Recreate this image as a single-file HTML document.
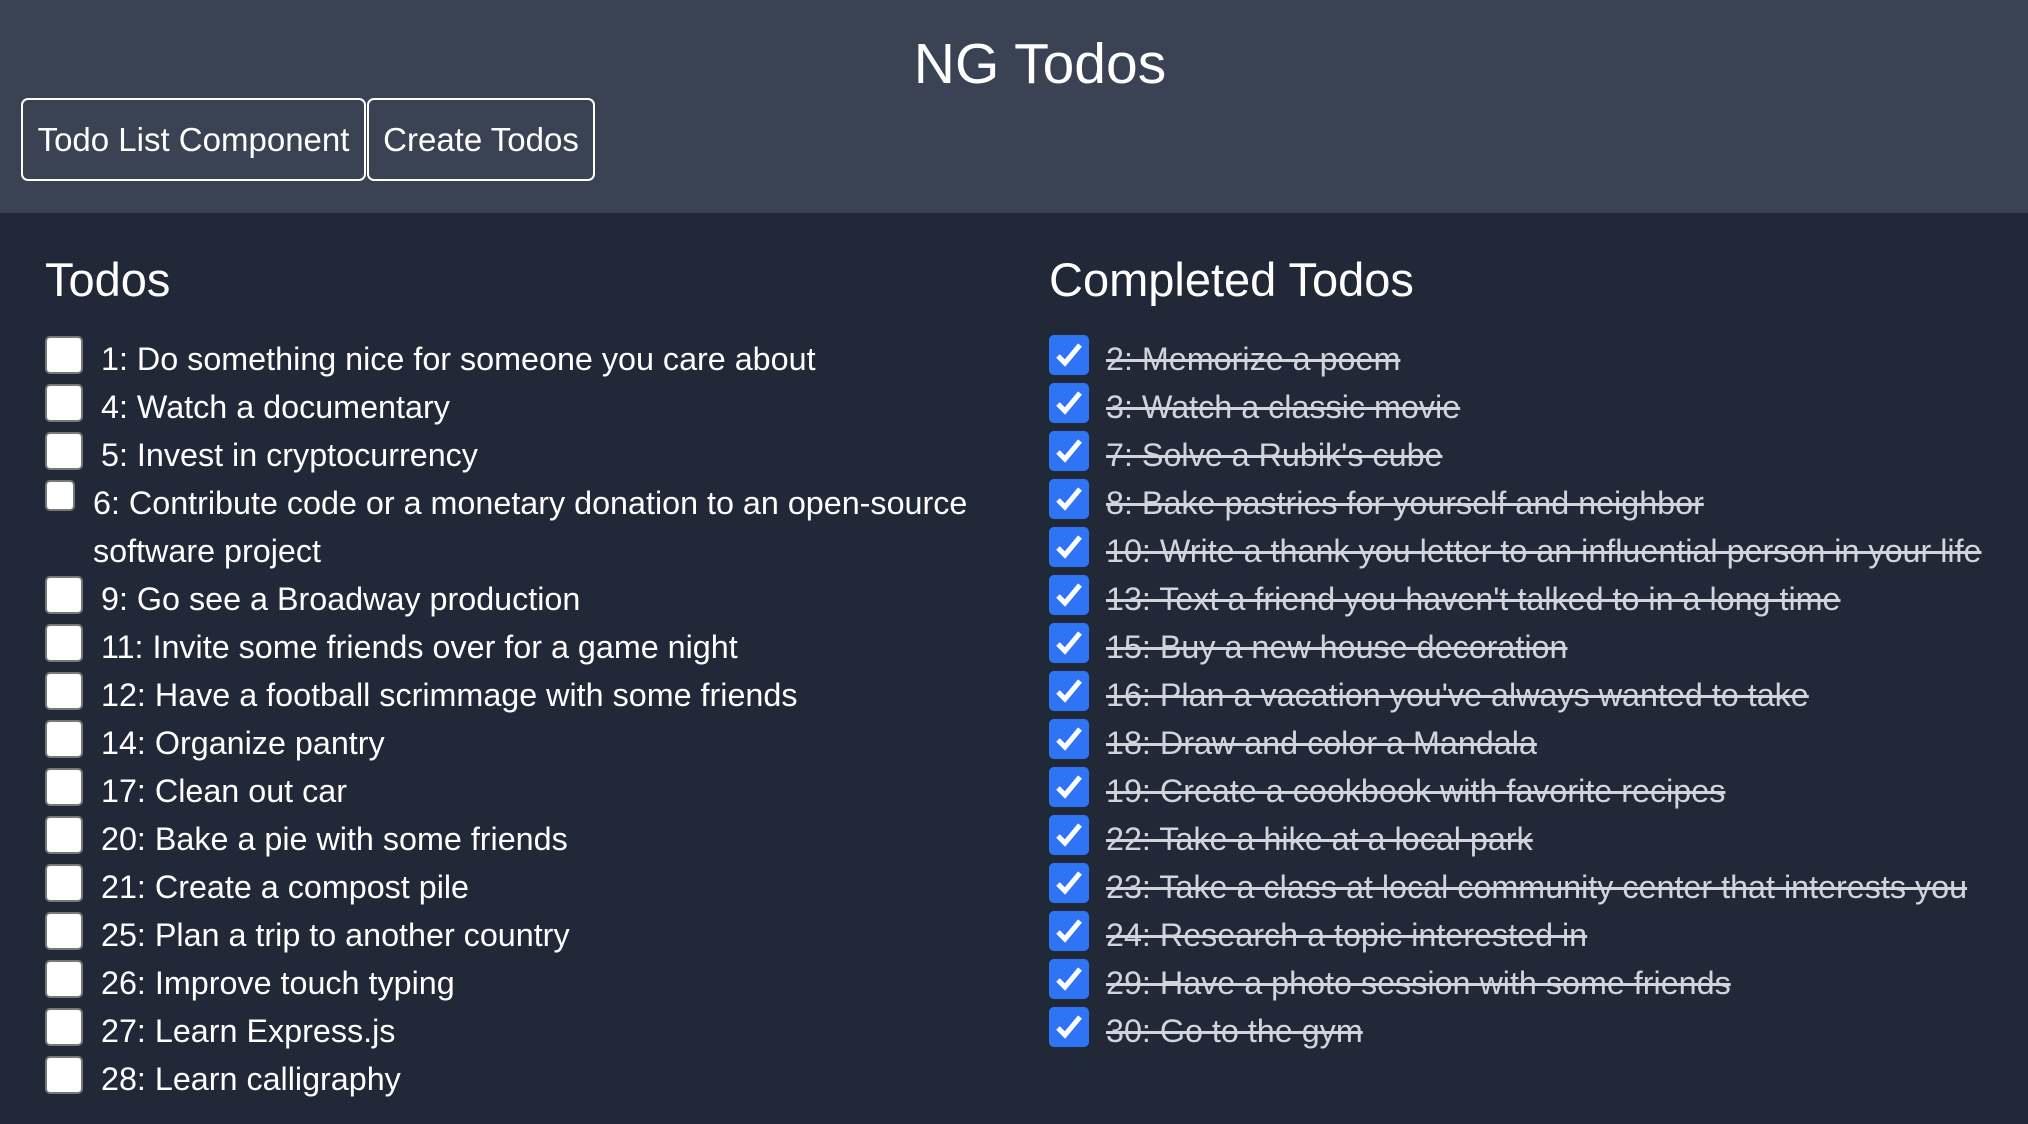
<!DOCTYPE html>
<html><head><meta charset="utf-8"><style>
*{margin:0;padding:0;box-sizing:border-box}
body{width:2028px;height:1124px;overflow:hidden;background:#212838;font-family:"Liberation Sans",sans-serif;color:#fff}
.hdr{position:absolute;left:0;top:0;width:2028px;height:213px;background:#3a4354}
.title{position:absolute;left:0;width:2080px;top:29px;text-align:center;font-size:57px;line-height:70px}
.btn{position:absolute;top:98px;height:83px;border:2px solid #fff;border-radius:7px;font-size:33px;line-height:79px;text-align:center}
h2{position:absolute;font-weight:normal;font-size:47px;top:252px;line-height:56px}
.col{position:absolute;top:335px;font-size:32.3px;line-height:48px}
.it{position:relative;display:flex;align-items:flex-start}
.cb{flex:none;width:38px;height:38px;background:#fff;border:2px solid #777;border-radius:5px;margin-top:1px;margin-right:18px}
.cb.s{width:30px;height:31px;margin-right:18px;margin-top:1px}
.ck{flex:none;width:40px;height:40px;background:#2f74f5;border-radius:5px;margin-top:0px;margin-right:17px;position:relative}
.ck svg{position:absolute;left:4px;top:4px}
.done{color:#d1d5db;text-decoration:line-through;text-decoration-thickness:3px;white-space:nowrap}
</style></head><body>
<div class="hdr">
<div class="title">NG Todos</div>
<div class="btn" style="left:21px;width:345px">Todo List Component</div>
<div class="btn" style="left:367px;width:228px">Create Todos</div>
</div>
<h2 style="left:45px">Todos</h2>
<h2 style="left:1049px">Completed Todos</h2>
<div class="col" style="left:45px;width:965px">
<div class="it"><div class="cb"></div><span>1: Do something nice for someone you care about</span></div>
<div class="it"><div class="cb"></div><span>4: Watch a documentary</span></div>
<div class="it"><div class="cb"></div><span>5: Invest in cryptocurrency</span></div>
<div class="it"><div class="cb s"></div><span>6: Contribute code or a monetary donation to an open-source software project</span></div>
<div class="it"><div class="cb"></div><span>9: Go see a Broadway production</span></div>
<div class="it"><div class="cb"></div><span>11: Invite some friends over for a game night</span></div>
<div class="it"><div class="cb"></div><span>12: Have a football scrimmage with some friends</span></div>
<div class="it"><div class="cb"></div><span>14: Organize pantry</span></div>
<div class="it"><div class="cb"></div><span>17: Clean out car</span></div>
<div class="it"><div class="cb"></div><span>20: Bake a pie with some friends</span></div>
<div class="it"><div class="cb"></div><span>21: Create a compost pile</span></div>
<div class="it"><div class="cb"></div><span>25: Plan a trip to another country</span></div>
<div class="it"><div class="cb"></div><span>26: Improve touch typing</span></div>
<div class="it"><div class="cb"></div><span>27: Learn Express.js</span></div>
<div class="it"><div class="cb"></div><span>28: Learn calligraphy</span></div>
</div>
<div class="col" style="left:1049px;width:979px">
<div class="it"><div class="ck"><svg width="32" height="32" viewBox="0 0 32 32"><path d="M5 17l7 7L27 6" fill="none" stroke="#fff" stroke-width="5"/></svg></div><span class="done">2: Memorize a poem</span></div>
<div class="it"><div class="ck"><svg width="32" height="32" viewBox="0 0 32 32"><path d="M5 17l7 7L27 6" fill="none" stroke="#fff" stroke-width="5"/></svg></div><span class="done">3: Watch a classic movie</span></div>
<div class="it"><div class="ck"><svg width="32" height="32" viewBox="0 0 32 32"><path d="M5 17l7 7L27 6" fill="none" stroke="#fff" stroke-width="5"/></svg></div><span class="done">7: Solve a Rubik's cube</span></div>
<div class="it"><div class="ck"><svg width="32" height="32" viewBox="0 0 32 32"><path d="M5 17l7 7L27 6" fill="none" stroke="#fff" stroke-width="5"/></svg></div><span class="done">8: Bake pastries for yourself and neighbor</span></div>
<div class="it"><div class="ck"><svg width="32" height="32" viewBox="0 0 32 32"><path d="M5 17l7 7L27 6" fill="none" stroke="#fff" stroke-width="5"/></svg></div><span class="done">10: Write a thank you letter to an influential person in your life</span></div>
<div class="it"><div class="ck"><svg width="32" height="32" viewBox="0 0 32 32"><path d="M5 17l7 7L27 6" fill="none" stroke="#fff" stroke-width="5"/></svg></div><span class="done">13: Text a friend you haven't talked to in a long time</span></div>
<div class="it"><div class="ck"><svg width="32" height="32" viewBox="0 0 32 32"><path d="M5 17l7 7L27 6" fill="none" stroke="#fff" stroke-width="5"/></svg></div><span class="done">15: Buy a new house decoration</span></div>
<div class="it"><div class="ck"><svg width="32" height="32" viewBox="0 0 32 32"><path d="M5 17l7 7L27 6" fill="none" stroke="#fff" stroke-width="5"/></svg></div><span class="done">16: Plan a vacation you've always wanted to take</span></div>
<div class="it"><div class="ck"><svg width="32" height="32" viewBox="0 0 32 32"><path d="M5 17l7 7L27 6" fill="none" stroke="#fff" stroke-width="5"/></svg></div><span class="done">18: Draw and color a Mandala</span></div>
<div class="it"><div class="ck"><svg width="32" height="32" viewBox="0 0 32 32"><path d="M5 17l7 7L27 6" fill="none" stroke="#fff" stroke-width="5"/></svg></div><span class="done">19: Create a cookbook with favorite recipes</span></div>
<div class="it"><div class="ck"><svg width="32" height="32" viewBox="0 0 32 32"><path d="M5 17l7 7L27 6" fill="none" stroke="#fff" stroke-width="5"/></svg></div><span class="done">22: Take a hike at a local park</span></div>
<div class="it"><div class="ck"><svg width="32" height="32" viewBox="0 0 32 32"><path d="M5 17l7 7L27 6" fill="none" stroke="#fff" stroke-width="5"/></svg></div><span class="done">23: Take a class at local community center that interests you</span></div>
<div class="it"><div class="ck"><svg width="32" height="32" viewBox="0 0 32 32"><path d="M5 17l7 7L27 6" fill="none" stroke="#fff" stroke-width="5"/></svg></div><span class="done">24: Research a topic interested in</span></div>
<div class="it"><div class="ck"><svg width="32" height="32" viewBox="0 0 32 32"><path d="M5 17l7 7L27 6" fill="none" stroke="#fff" stroke-width="5"/></svg></div><span class="done">29: Have a photo session with some friends</span></div>
<div class="it"><div class="ck"><svg width="32" height="32" viewBox="0 0 32 32"><path d="M5 17l7 7L27 6" fill="none" stroke="#fff" stroke-width="5"/></svg></div><span class="done">30: Go to the gym</span></div>
</div>
</body></html>
